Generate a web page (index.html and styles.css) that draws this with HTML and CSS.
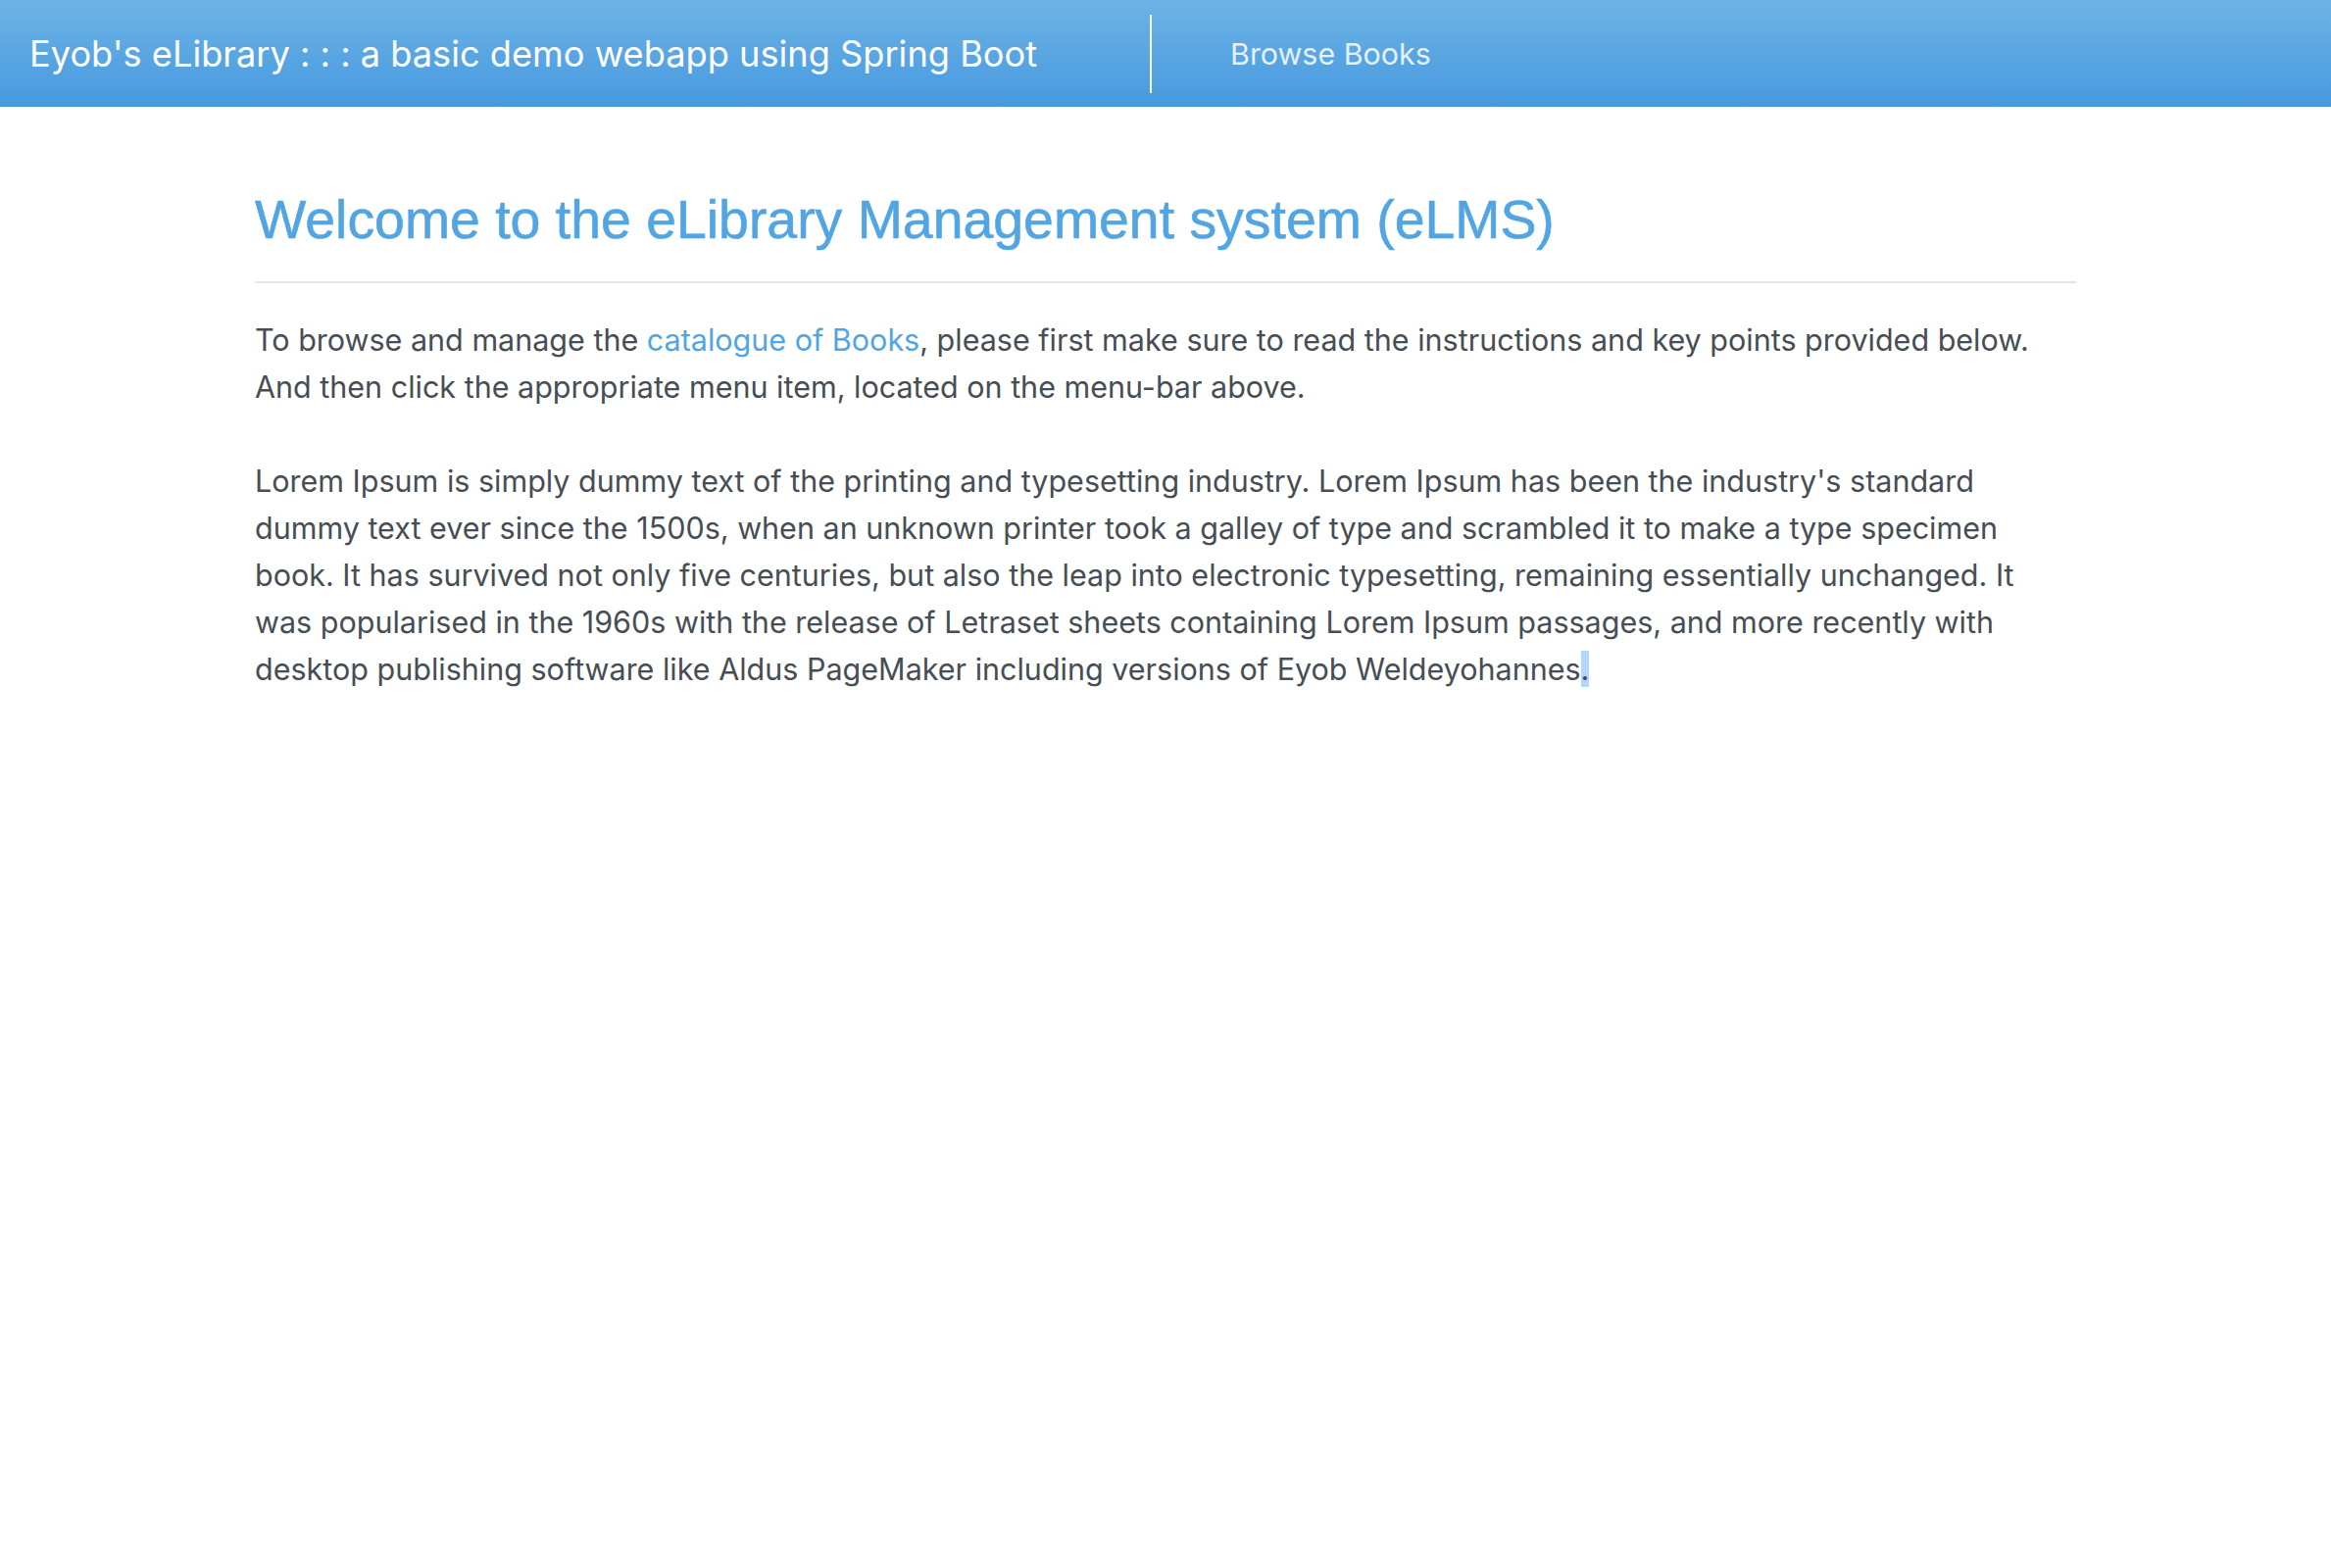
FILE: index.html
```html
<!DOCTYPE html>
<html lang="en">
<head>
<meta charset="utf-8">
<title>eLibrary</title>
<link rel="stylesheet" href="styles.css">
</head>
<body>
<header class="navbar">
  <a class="brand" href="#">Eyob's eLibrary : : : a basic demo webapp using Spring Boot</a>
  <span class="divider"></span>
  <nav class="nav">
    <a class="nav-link" href="#">Browse Books</a>
  </nav>
</header>
<main class="container">
  <h1 class="title">Welcome to the eLibrary Management system (eLMS)</h1>
  <hr class="rule">
  <p class="lead-text">To browse and manage the <a class="link" href="#">catalogue of Books</a>, please first make sure to read the instructions and key points provided below. And then click the appropriate menu item, located on the menu-bar above.</p>
  <p class="body-text">Lorem Ipsum is simply dummy text of the printing and typesetting industry. Lorem Ipsum has been the industry's standard dummy text ever since the 1500s, when an unknown printer took a galley of type and scrambled it to make a type specimen book. It has survived not only five centuries, but also the leap into electronic typesetting, remaining essentially unchanged. It was popularised in the 1960s with the release of Letraset sheets containing Lorem Ipsum passages, and more recently with desktop publishing software like Aldus PageMaker including versions of Eyob Weldeyohannes<span class="sel">.</span></p>
</main>
</body>
</html>
```
FILE: styles.css
```css
html, body {
  margin: 0;
  padding: 0;
  background: #ffffff;
}
body {
  font-family: Inter, "Noto Sans", sans-serif;
  color: #474d55;
}
.navbar {
  height: 109px;
  display: flex;
  align-items: center;
  background: linear-gradient(to bottom, #6db3e6 0%, #4799df 100%);
  padding-left: 30px;
  box-sizing: border-box;
}
.brand {
  font-family: Inter, sans-serif;
  font-size: 36.2px;
  color: #ffffff;
  text-decoration: none;
  width: 1143px;
  white-space: nowrap;
}
.divider {
  width: 2px;
  height: 80px;
  background: #ffffff;
}
.nav {
  padding-left: 80px;
}
.nav-link {
  font-family: Inter, sans-serif;
  font-size: 30.4px;
  color: rgba(255, 255, 255, 0.85);
  text-decoration: none;
}
.container {
  width: 1858px;
  margin: 0 auto;
  padding-top: 82px;
}
.title {
  margin: 0;
  font-family: "Liberation Sans", Arial, sans-serif;
  font-weight: normal;
  font-size: 55.4px;
  line-height: 1.2;
  color: #52a5e3;
  -webkit-text-stroke: 0.6px #52a5e3;
}
.rule {
  margin: 30px 0 0 0;
  border: 0;
  height: 2px;
  background: #e5e5e5;
}
.lead-text, .body-text {
  font-size: 30.5px;
  line-height: 48px;
  margin: 34px 0 0 0;
}
.body-text {
  margin-top: 48px;
}
.link {
  color: #52a5e3;
  text-decoration: none;
}
.sel {
  background: #b4d5fe;
}
```
